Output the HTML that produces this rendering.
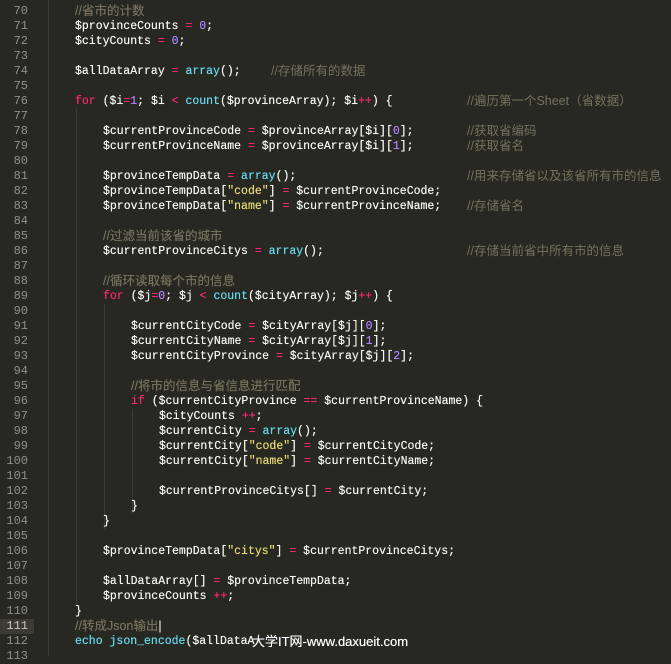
<!DOCTYPE html>
<html><head><meta charset="utf-8"><style>
body{margin:0;width:671px;height:656px;background:#272822;overflow:hidden;position:relative;font-family:"Liberation Mono","Noto Sans CJK SC",monospace;font-size:11.5px;color:#F8F8F2}
.l{position:absolute;left:0;height:15px;line-height:15px;width:671px;white-space:pre}
.c{position:absolute;text-shadow:0 0 0.4px currentColor}
.n{position:absolute;left:0;width:28px;text-align:right;color:#8F908A;font-size:12px}
.k{color:#F92672}.f{color:#66D9EF}.d{color:#AE81FF}.s{color:#E6DB74}
.m{color:#75715E;font-family:"Liberation Sans","Noto Sans CJK SC",sans-serif;font-size:12.5px}
.cm{position:absolute;color:#75715E;font-family:"Liberation Sans","Noto Sans CJK SC",sans-serif;font-size:12.5px}
.g{position:absolute;width:1px;background:#3b3c35}
</style></head><body>
<div style="position:absolute;left:0;top:619px;width:34px;height:15px;background:#3b3b33"></div>
<div class="g" style="left:48px;top:0;height:656px"></div>
<div class="g" style="left:76px;top:109px;height:495px"></div>
<div class="g" style="left:104px;top:304px;height:225px"></div>
<div class="g" style="left:132px;top:409px;height:105px"></div>

<div class="l" style="top:4px"><span class="n">70</span><span class="c m" style="left:75px">//省市的计数</span></div>
<div class="l" style="top:19px"><span class="n">71</span><span class="c" style="left:75px">$provinceCounts <span class="k">=</span> <span class="d">0</span>;</span></div>
<div class="l" style="top:34px"><span class="n">72</span><span class="c" style="left:75px">$cityCounts <span class="k">=</span> <span class="d">0</span>;</span></div>
<div class="l" style="top:49px"><span class="n">73</span></div>
<div class="l" style="top:64px"><span class="n">74</span><span class="c" style="left:75px">$allDataArray <span class="k">=</span> <span class="f">array</span>();</span><span class="cm" style="left:271px">//存储所有的数据</span></div>
<div class="l" style="top:79px"><span class="n">75</span></div>
<div class="l" style="top:94px"><span class="n">76</span><span class="c" style="left:75px"><span class="k">for</span> ($i<span class="k">=</span><span class="d">1</span>; $i <span class="k">&lt;</span> <span class="f">count</span>($provinceArray); $i<span class="k">++</span>) {</span><span class="cm" style="left:467px">//遍历第一个Sheet（省数据）</span></div>
<div class="l" style="top:109px"><span class="n">77</span></div>
<div class="l" style="top:124px"><span class="n">78</span><span class="c" style="left:103px">$currentProvinceCode <span class="k">=</span> $provinceArray[$i][<span class="d">0</span>];</span><span class="cm" style="left:467px">//获取省编码</span></div>
<div class="l" style="top:139px"><span class="n">79</span><span class="c" style="left:103px">$currentProvinceName <span class="k">=</span> $provinceArray[$i][<span class="d">1</span>];</span><span class="cm" style="left:467px">//获取省名</span></div>
<div class="l" style="top:154px"><span class="n">80</span></div>
<div class="l" style="top:169px"><span class="n">81</span><span class="c" style="left:103px">$provinceTempData <span class="k">=</span> <span class="f">array</span>();</span><span class="cm" style="left:467px">//用来存储省以及该省所有市的信息</span></div>
<div class="l" style="top:184px"><span class="n">82</span><span class="c" style="left:103px">$provinceTempData[<span class="s">"code"</span>] <span class="k">=</span> $currentProvinceCode;</span></div>
<div class="l" style="top:199px"><span class="n">83</span><span class="c" style="left:103px">$provinceTempData[<span class="s">"name"</span>] <span class="k">=</span> $currentProvinceName;</span><span class="cm" style="left:467px">//存储省名</span></div>
<div class="l" style="top:214px"><span class="n">84</span></div>
<div class="l" style="top:229px"><span class="n">85</span><span class="c m" style="left:103px">//过滤当前该省的城市</span></div>
<div class="l" style="top:244px"><span class="n">86</span><span class="c" style="left:103px">$currentProvinceCitys <span class="k">=</span> <span class="f">array</span>();</span><span class="cm" style="left:467px">//存储当前省中所有市的信息</span></div>
<div class="l" style="top:259px"><span class="n">87</span></div>
<div class="l" style="top:274px"><span class="n">88</span><span class="c m" style="left:103px">//循环读取每个市的信息</span></div>
<div class="l" style="top:289px"><span class="n">89</span><span class="c" style="left:103px"><span class="k">for</span> ($j<span class="k">=</span><span class="d">0</span>; $j <span class="k">&lt;</span> <span class="f">count</span>($cityArray); $j<span class="k">++</span>) {</span></div>
<div class="l" style="top:304px"><span class="n">90</span></div>
<div class="l" style="top:319px"><span class="n">91</span><span class="c" style="left:131px">$currentCityCode <span class="k">=</span> $cityArray[$j][<span class="d">0</span>];</span></div>
<div class="l" style="top:334px"><span class="n">92</span><span class="c" style="left:131px">$currentCityName <span class="k">=</span> $cityArray[$j][<span class="d">1</span>];</span></div>
<div class="l" style="top:349px"><span class="n">93</span><span class="c" style="left:131px">$currentCityProvince <span class="k">=</span> $cityArray[$j][<span class="d">2</span>];</span></div>
<div class="l" style="top:364px"><span class="n">94</span></div>
<div class="l" style="top:379px"><span class="n">95</span><span class="c m" style="left:131px">//将市的信息与省信息进行匹配</span></div>
<div class="l" style="top:394px"><span class="n">96</span><span class="c" style="left:131px"><span class="k">if</span> ($currentCityProvince <span class="k">==</span> $currentProvinceName) {</span></div>
<div class="l" style="top:409px"><span class="n">97</span><span class="c" style="left:159px">$cityCounts <span class="k">++</span>;</span></div>
<div class="l" style="top:424px"><span class="n">98</span><span class="c" style="left:159px">$currentCity <span class="k">=</span> <span class="f">array</span>();</span></div>
<div class="l" style="top:439px"><span class="n">99</span><span class="c" style="left:159px">$currentCity[<span class="s">"code"</span>] <span class="k">=</span> $currentCityCode;</span></div>
<div class="l" style="top:454px"><span class="n">100</span><span class="c" style="left:159px">$currentCity[<span class="s">"name"</span>] <span class="k">=</span> $currentCityName;</span></div>
<div class="l" style="top:469px"><span class="n">101</span></div>
<div class="l" style="top:484px"><span class="n">102</span><span class="c" style="left:159px">$currentProvinceCitys[] <span class="k">=</span> $currentCity;</span></div>
<div class="l" style="top:499px"><span class="n">103</span><span class="c" style="left:131px">}</span></div>
<div class="l" style="top:514px"><span class="n">104</span><span class="c" style="left:103px">}</span></div>
<div class="l" style="top:529px"><span class="n">105</span></div>
<div class="l" style="top:544px"><span class="n">106</span><span class="c" style="left:103px">$provinceTempData[<span class="s">"citys"</span>] <span class="k">=</span> $currentProvinceCitys;</span></div>
<div class="l" style="top:559px"><span class="n">107</span></div>
<div class="l" style="top:574px"><span class="n">108</span><span class="c" style="left:103px">$allDataArray[] <span class="k">=</span> $provinceTempData;</span></div>
<div class="l" style="top:589px"><span class="n">109</span><span class="c" style="left:103px">$provinceCounts <span class="k">++</span>;</span></div>
<div class="l" style="top:604px"><span class="n">110</span><span class="c" style="left:75px">}</span></div>
<div class="l" style="top:619px"><span class="n" style="color:#c8c8c0">111</span><span class="c m" style="left:75px">//转成Json输出<span style="color:#F8F8F2">|</span></span></div>
<div class="l" style="top:634px"><span class="n">112</span><span class="c" style="left:75px"><span class="f">echo</span> <span class="f">json_encode</span>($allDataA</span><span class="c" style="left:252px;color:#fff;font-family:'Liberation Sans','Noto Sans CJK SC',sans-serif;font-size:13px">大学IT网-www.daxueit.com</span></div>
<div class="l" style="top:649px"><span class="n">113</span></div>
</body></html>
